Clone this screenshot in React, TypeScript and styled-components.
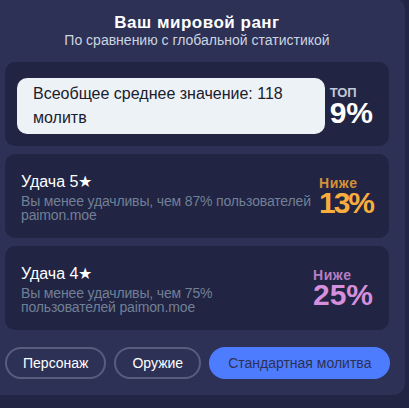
import React from "react";
import styled, { createGlobalStyle } from "styled-components";

const Global = createGlobalStyle`
  html, body { margin: 0; padding: 0; background: #222543; overflow: hidden; }
  body { font-family: "Liberation Sans", Arial, sans-serif; }
  * { box-sizing: border-box; }
`;

const Panel = styled.div`
  margin: -2px 0 0 -11px;
  width: 416px;
  background: #2d3156;
  border-radius: 12px;
  padding: 16px;
  display: flex;
  flex-direction: column;
`;

const Header = styled.div`
  display: flex;
  flex-direction: column;
  align-items: center;
  margin-bottom: 14px;
`;

const Title = styled.div`
  font-size: 17px;
  line-height: 18px;
  letter-spacing: 0.5px;
  font-weight: 700;
  color: #ffffff;
`;

const Subtitle = styled.div`
  font-size: 14px;
  line-height: 16px;
  color: #cbd5e0;
`;

const Cards = styled.div`
  display: flex;
  flex-direction: column;
  gap: 8px;
`;

const Card = styled.div<{ $highlight?: boolean }>`
  background: #212443;
  border-radius: 10px;
  display: flex;
  align-items: center;
  gap: 5px;
  padding: ${(p) => (p.$highlight ? "16px 16px 12px 12px" : "16px")};
`;

const Average = styled.div`
  flex: 1;
  background: #edf2f7;
  color: #1a202c;
  border-radius: 10px;
  padding: 4px 16px;
  font-size: 16px;
  line-height: 24px;
`;

const Info = styled.div`
  flex: 1;
  display: flex;
  flex-direction: column;
`;

const LuckTitle = styled.div`
  font-size: 16px;
  line-height: 24px;
  color: #ffffff;
`;

const LuckText = styled.div`
  font-size: 14px;
  line-height: 14px;
  letter-spacing: -0.15px;
  color: #718096;
`;

const Rank = styled.div`
  display: flex;
  flex-direction: column;
  align-items: flex-start;
  font-weight: 700;
`;

const RankLabel = styled.span<{ $color: string; $wide?: boolean }>`
  font-size: ${(p) => (p.$wide ? "14px" : "13px")};
  line-height: 12px;
  letter-spacing: ${(p) => (p.$wide ? "0.6px" : "0")};
  color: ${(p) => p.$color};
`;

const RankValue = styled.span<{ $color: string; $tight?: boolean }>`
  margin-top: 2px;
  font-size: 30px;
  line-height: 24px;
  letter-spacing: ${(p) => (p.$tight ? "-2px" : "0")};
  color: ${(p) => p.$color};
`;

const Buttons = styled.div`
  display: flex;
  gap: 8px;
  margin-top: 17px;
`;

const Button = styled.button<{ $active?: boolean }>`
  flex-shrink: 0;
  white-space: nowrap;
  font-family: "Liberation Sans", Arial, sans-serif;
  font-size: 14px;
  height: 32px;
  padding: 0 ${(p) => (p.$active ? "17px" : "16px")};
  border-radius: 999px;
  border: 2px solid ${(p) => (p.$active ? "#4e7cff" : "#585d80")};
  background: ${(p) => (p.$active ? "#4e7cff" : "transparent")};
  color: ${(p) => (p.$active ? "#2d3154" : "#ffffff")};
  cursor: pointer;
`;

export default function App() {
  return (
    <>
      <Global />
      <Panel>
        <Header>
          <Title>Ваш мировой ранг</Title>
          <Subtitle>По сравнению с глобальной статистикой</Subtitle>
        </Header>
        <Cards>
          <Card $highlight>
            <Average>Всеобщее среднее значение: 118 молитв</Average>
            <Rank>
              <RankLabel $color="#c3c8d8">ТОП</RankLabel>
              <RankValue $color="#ffffff">9%</RankValue>
            </Rank>
          </Card>
          <Card>
            <Info>
              <LuckTitle>Удача 5★</LuckTitle>
              <LuckText>Вы менее удачливы, чем 87% пользователей paimon.moe</LuckText>
            </Info>
            <Rank>
              <RankLabel $wide $color="#d4913a">Ниже</RankLabel>
              <RankValue $tight $color="#f9ad3e">13%</RankValue>
            </Rank>
          </Card>
          <Card>
            <Info>
              <LuckTitle>Удача 4★</LuckTitle>
              <LuckText>Вы менее удачливы, чем 75% пользователей paimon.moe</LuckText>
            </Info>
            <Rank>
              <RankLabel $wide $color="#b47ec4">Ниже</RankLabel>
              <RankValue $color="#d68fdc">25%</RankValue>
            </Rank>
          </Card>
        </Cards>
        <Buttons>
          <Button>Персонаж</Button>
          <Button>Оружие</Button>
          <Button $active>Стандартная молитва</Button>
        </Buttons>
      </Panel>
    </>
  );
}
